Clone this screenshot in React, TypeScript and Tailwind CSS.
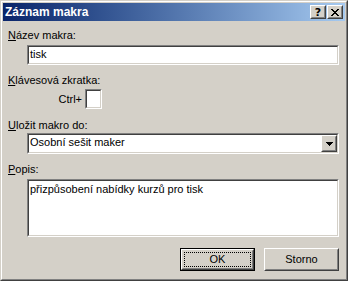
import React from "react";

const raisedOuter =
  "border border-t-white border-l-white border-b-[#404040] border-r-[#404040]";
const raisedInner =
  "border border-t-[#d4d0c8] border-l-[#d4d0c8] border-b-[#808080] border-r-[#808080]";
const sunkenOuter =
  "border border-t-[#808080] border-l-[#808080] border-b-white border-r-white";
const sunkenInner =
  "border border-t-[#404040] border-l-[#404040] border-b-[#d4d0c8] border-r-[#d4d0c8]";

function Label({ first, rest }: { first: string; rest: string }) {
  return (
    <div className="h-[13px] leading-[13px] pl-[5px] whitespace-nowrap">
      <span className="underline underline-offset-[1px]">{first}</span>
      {rest}
    </div>
  );
}

function CaptionButton({ children }: { children: React.ReactNode }) {
  return (
    <div className={`w-[16px] h-[14px] bg-[#d4d0c8] ${raisedOuter}`}>
      <div className={`w-full h-full flex items-center justify-center ${raisedInner}`}>
        {children}
      </div>
    </div>
  );
}

export default function App() {
  return (
    <div className="w-[348px] h-[281px] font-['Liberation_Sans',Arial,sans-serif] text-[11px] text-black">
      <div
        className={`w-[348px] h-[281px] bg-[#d4d0c8] border border-t-[#d4d0c8] border-l-[#d4d0c8] border-b-[#404040] border-r-[#404040]`}
      >
        <div className="w-full h-full border border-t-white border-l-white border-b-[#808080] border-r-[#808080] p-[1px] flex flex-col">
          {/* Title bar */}
          <div className="h-[18px] flex items-center bg-linear-to-r from-[#0a246a] to-[#a6caf0] pl-[2px] pr-[2px]">
            <div className="flex-1 text-white font-bold text-[12px] leading-[18px] whitespace-nowrap">
              Záznam makra
            </div>
            <div className="flex items-center gap-[1px]">
              <CaptionButton>
                <span className="font-bold text-[11px] leading-none font-['DejaVu_Sans',sans-serif] mt-[0px]">?</span>
              </CaptionButton>
              <CaptionButton>
                <svg width="8" height="7" viewBox="0 0 8 7" shapeRendering="crispEdges">
                  <path
                    d="M0 0h2v1H0zM6 0h2v1H6zM1 1h2v1H1zM5 1h2v1H5zM2 2h4v1H2zM3 3h2v1H3zM2 4h4v1H2zM1 5h2v1H1zM5 5h2v1H5zM0 6h2v1H0zM6 6h2v1H6z"
                    fill="#000"
                  />
                </svg>
              </CaptionButton>
            </div>
          </div>

          {/* Content */}
          <div className="flex flex-col">
            <div className="mt-[8px]">
              <Label first="N" rest="ázev makra:" />
            </div>
            <div className={`mt-[3px] ml-[24px] w-[312px] h-[20px] ${sunkenOuter}`}>
              <div className={`w-full h-full bg-white ${sunkenInner} pl-[1px] leading-[14px]`}>
                tisk
              </div>
            </div>

            <div className="mt-[9px]">
              <Label first="K" rest="lávesová zkratka:" />
            </div>
            <div className="mt-[2px] flex items-center">
              <div className="w-[82px] text-right pr-[3px] leading-[13px]">Ctrl+</div>
              <div className={`w-[17px] h-[20px] ${sunkenOuter}`}>
                <div className={`w-full h-full bg-white ${sunkenInner}`} />
              </div>
            </div>

            <div className="mt-[10px]">
              <Label first="U" rest="ložit makro do:" />
            </div>
            <div className={`mt-[1px] ml-[24px] w-[312px] h-[21px] ${sunkenOuter}`}>
              <div className={`w-full h-full bg-white ${sunkenInner} flex`}>
                <div className="flex-1 pl-[1px] leading-[15px]">Osobní sešit maker</div>
                <div className={`w-[16px] h-full bg-[#d4d0c8] ${raisedOuter}`}>
                  <div className={`w-full h-full flex items-center justify-center ${raisedInner}`}>
                    <svg width="7" height="4" viewBox="0 0 7 4" shapeRendering="crispEdges">
                      <path d="M0 0h7v1H0zM1 1h5v1H1zM2 2h3v1H2zM3 3h1v1H3z" fill="#000" />
                    </svg>
                  </div>
                </div>
              </div>
            </div>

            <div className="mt-[9px]">
              <Label first="P" rest="opis:" />
            </div>
            <div className={`mt-[3px] ml-[24px] w-[312px] h-[58px] ${sunkenOuter}`}>
              <div className={`w-full h-full bg-white ${sunkenInner} pl-[1px] pt-[1px] leading-[14px]`}>
                přizpůsobení nabídky kurzů pro tisk
              </div>
            </div>

            <div className="mt-[11px] flex pl-[177px] gap-[9px]">
              <div className="w-[75px] h-[23px] border border-black bg-[#d4d0c8]">
                <div className={`w-full h-full ${raisedOuter}`}>
                  <div className={`w-full h-full ${raisedInner} p-[1px]`}>
                    <div className="w-full h-full border border-dotted border-black flex items-center justify-center leading-[13px]">
                      OK
                    </div>
                  </div>
                </div>
              </div>
              <div className={`w-[75px] h-[23px] bg-[#d4d0c8] ${raisedOuter}`}>
                <div className={`w-full h-full ${raisedInner} flex items-center justify-center leading-[13px]`}>
                  Storno
                </div>
              </div>
            </div>
          </div>
        </div>
      </div>
    </div>
  );
}
